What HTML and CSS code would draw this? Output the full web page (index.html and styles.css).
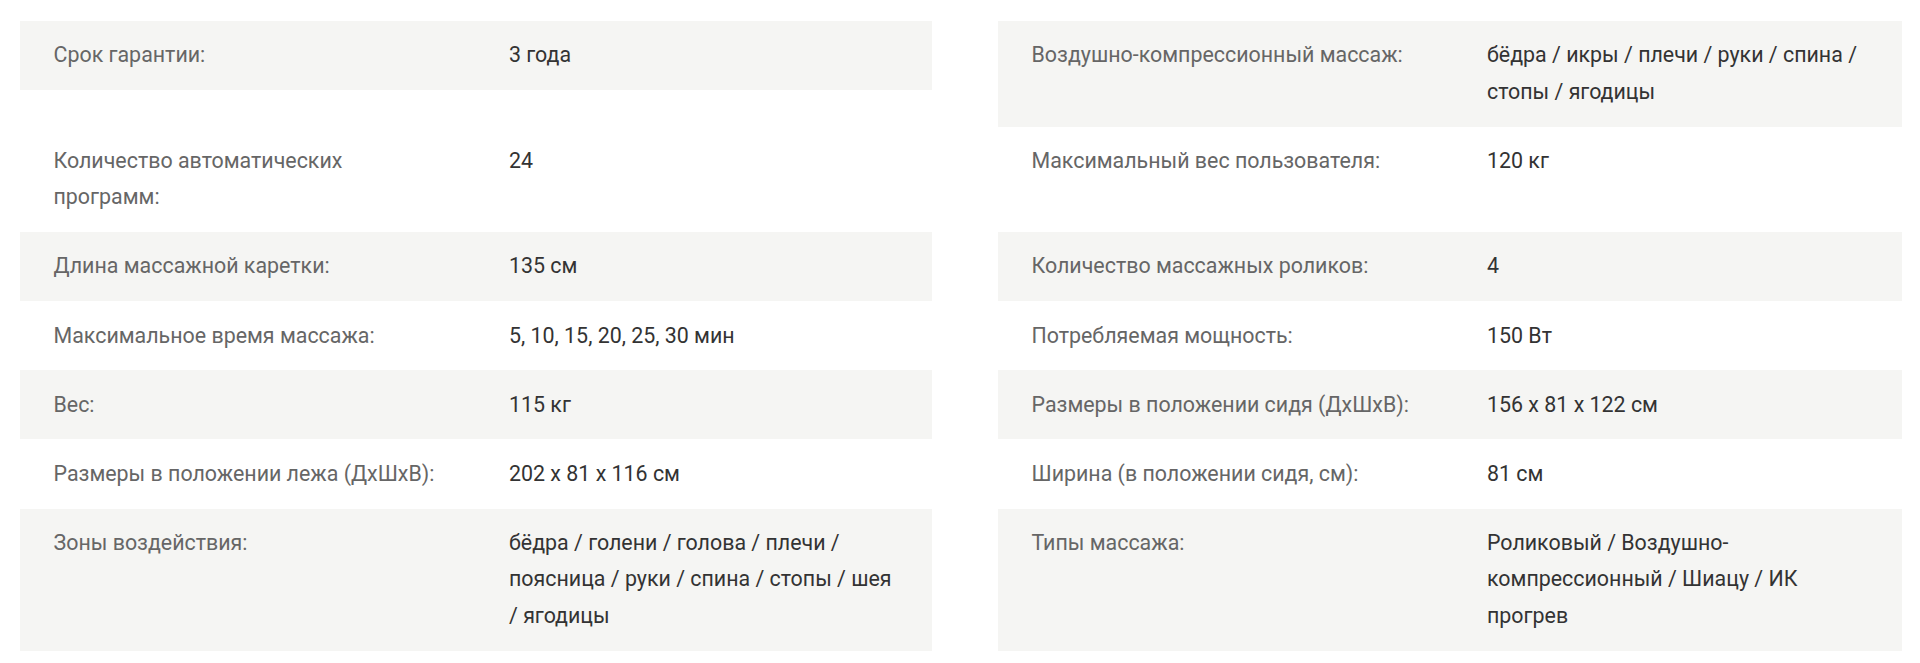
FILE: index.html
```html
<!DOCTYPE html>
<html lang="ru">
<head>
<meta charset="utf-8">
<title>Характеристики</title>
<link rel="stylesheet" href="styles.css">
</head>
<body>
<div class="specs">
  <div class="spec spec--alt"><div class="spec__name">Срок гарантии:</div><div class="spec__value">3 года</div></div>
  <div class="spec spec--alt"><div class="spec__name">Воздушно-компрессионный массаж:</div><div class="spec__value">бёдра / икры / плечи / руки / спина / стопы / ягодицы</div></div>

  <div class="spec"><div class="spec__name">Количество автоматических программ:</div><div class="spec__value">24</div></div>
  <div class="spec"><div class="spec__name">Максимальный вес пользователя:</div><div class="spec__value">120 кг</div></div>

  <div class="spec spec--alt"><div class="spec__name">Длина массажной каретки:</div><div class="spec__value">135 см</div></div>
  <div class="spec spec--alt"><div class="spec__name">Количество массажных роликов:</div><div class="spec__value">4</div></div>

  <div class="spec"><div class="spec__name">Максимальное время массажа:</div><div class="spec__value">5, 10, 15, 20, 25, 30 мин</div></div>
  <div class="spec"><div class="spec__name">Потребляемая мощность:</div><div class="spec__value">150 Вт</div></div>

  <div class="spec spec--alt"><div class="spec__name">Вес:</div><div class="spec__value">115 кг</div></div>
  <div class="spec spec--alt"><div class="spec__name">Размеры в положении сидя (ДхШхВ):</div><div class="spec__value">156 x 81 x 122 см</div></div>

  <div class="spec"><div class="spec__name">Размеры в положении лежа (ДхШхВ):</div><div class="spec__value">202 x 81 x 116 см</div></div>
  <div class="spec"><div class="spec__name">Ширина (в положении сидя, см):</div><div class="spec__value">81 см</div></div>

  <div class="spec spec--alt"><div class="spec__name">Зоны воздействия:</div><div class="spec__value">бёдра / голени / голова / плечи / поясница / руки / спина / стопы / шея / ягодицы</div></div>
  <div class="spec spec--alt"><div class="spec__name">Типы массажа:</div><div class="spec__value">Роликовый / Воздушно-компрессионный / Шиацу / ИК прогрев</div></div>
</div>
</body>
</html>
```
FILE: styles.css
```css
html, body {
  margin: 0;
  padding: 0;
  background: #ffffff;
}

body {
  font-family: Roboto, "Liberation Sans", Arial, sans-serif;
  font-size: 21.4px;
  line-height: 36.5px;
}

.specs {
  display: grid;
  grid-template-columns: 912px 904px;
  column-gap: 66px;
  align-items: start;
  padding: 21px 0 12px 20px;
}

.spec {
  display: grid;
  grid-template-columns: 489px 1fr;
  padding: 16.3px 0;
}

.spec--alt {
  background: #f5f5f3;
}

.spec__name {
  padding: 0 70px 0 33.5px;
  color: #666666;
}

.spec__value {
  max-width: 386px;
  color: #333333;
}
```
